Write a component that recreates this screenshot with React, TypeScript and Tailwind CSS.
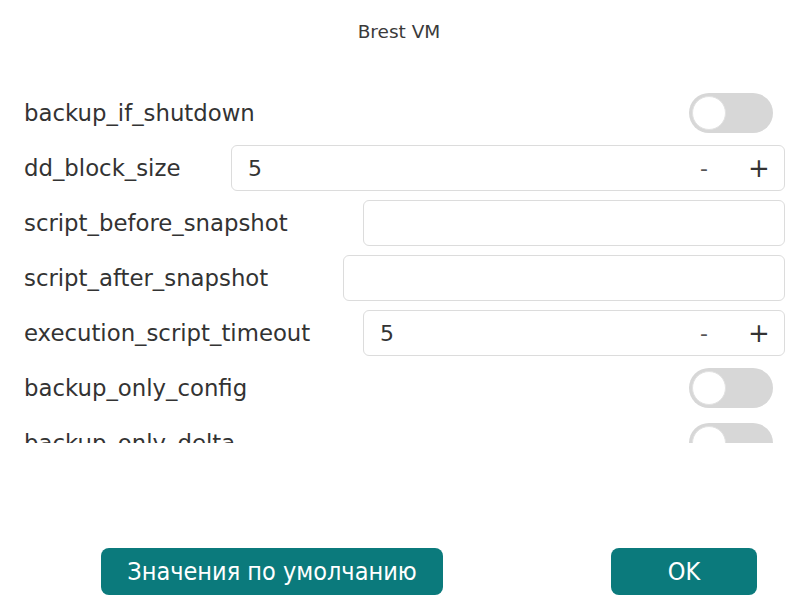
import React from "react"

type Row =
  | { kind: "toggle"; label: string }
  | { kind: "number"; label: string; value: string; width: string }
  | { kind: "text"; label: string; width: string }

const rows: Row[] = [
  { kind: "toggle", label: "backup_if_shutdown" },
  { kind: "number", label: "dd_block_size", value: "5", width: "w-[554px]" },
  { kind: "text", label: "script_before_snapshot", width: "w-[422px]" },
  { kind: "text", label: "script_after_snapshot", width: "w-[442px]" },
  { kind: "number", label: "execution_script_timeout", value: "5", width: "w-[422px]" },
  { kind: "toggle", label: "backup_only_config" },
  { kind: "toggle", label: "backup_only_delta" },
]

function Toggle() {
  return (
    <div className="mr-[12px] flex h-[40px] w-[84px] shrink-0 items-center rounded-full bg-[#d7d7d7] px-[3px]">
      <div className="h-[34px] w-[34px] rounded-full border border-[#e2e2e2] bg-white" />
    </div>
  )
}

export default function App() {
  return (
    <div
      className="flex h-[609px] w-[798px] flex-col bg-white text-[#333]"
      style={{ fontFamily: '"DejaVu Sans", sans-serif' }}
    >
      <div className="flex h-[64px] items-center justify-center text-[18.5px] text-[#3a3a3a]">Brest VM</div>

      <div className="mt-[26px] flex h-[353px] flex-col gap-[9px] overflow-hidden pl-[24px] pr-[13px]">
        {rows.map((row) => (
          <div key={row.label} className="flex h-[46px] shrink-0 items-center justify-between">
            <span className="whitespace-nowrap text-[22.8px]">{row.label}</span>
            {row.kind === "toggle" && <Toggle />}
            {row.kind === "number" && (
              <div
                className={`${row.width} flex h-[46px] shrink-0 items-center rounded-[6px] border border-[#dcdcdc] pl-[16px] pr-[14px] text-[22px]`}
              >
                <span className="flex-1">{row.value}</span>
                <span className="w-[20px] text-center text-[#555]">-</span>
                <span className="ml-[34px] w-[22px] text-center text-[26px]">+</span>
              </div>
            )}
            {row.kind === "text" && (
              <div className={`${row.width} h-[46px] shrink-0 rounded-[6px] border border-[#dcdcdc]`} />
            )}
          </div>
        ))}
      </div>

      <div className="flex-1" />

      <div
        className="flex items-center pb-[14px] pl-[101px]"
        style={{ fontFamily: '"DejaVu Sans Condensed", "DejaVu Sans", sans-serif' }}
      >
        <button className="flex h-[47px] w-[342px] items-center justify-center rounded-[8px] bg-[#0b7a7c] text-[25px] text-white">
          Значения по умолчанию
        </button>
        <button className="ml-[168px] flex h-[47px] w-[146px] items-center justify-center rounded-[8px] bg-[#0b7a7c] text-[25px] text-white">
          OK
        </button>
      </div>
    </div>
  )
}
